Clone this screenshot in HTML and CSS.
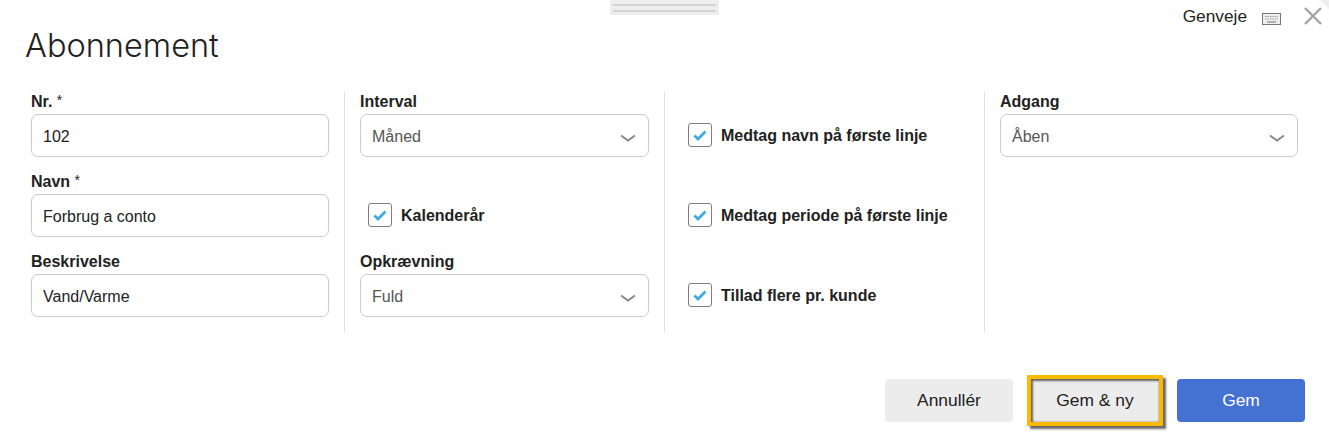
FILE: index.html
```html
<!DOCTYPE html>
<html lang="da">
<head>
  <meta charset="UTF-8" />
  <title>Abonnement</title>
  <link rel="stylesheet" href="styles.css">
</head>
<body>
  <div class="dialog">
    <div class="drag-handle"><span></span><span></span></div>
    <div class="corner"></div>

    <div class="topbar">
      <span class="shortcut">Genveje</span>
      <svg class="keyboard" width="20" height="14" viewBox="0 0 20 14">
        <rect x="0.5" y="1.5" width="18" height="11" fill="#eee" stroke="#777" />
        <path d="M3 4.5h13M3 7h13" stroke="#999" stroke-width="1.2" stroke-dasharray="1.5 1" fill="none" />
        <path d="M5 10h9" stroke="#888" stroke-width="1.2" fill="none" />
      </svg>
      <svg class="close" width="20" height="20" viewBox="0 0 20 20">
        <path d="M2 2l16 16M18 2L2 18" stroke="#a3a3a3" stroke-width="2.4" fill="none" />
      </svg>
    </div>

    <h1 class="title">Abonnement</h1>

    <form class="columns">
      <div class="col col-first">
        <div class="field">
          <label>Nr. <span class="req">*</span></label>
          <input class="control" type="text" value="102">
        </div>
        <div class="field">
          <label>Navn <span class="req">*</span></label>
          <input class="control" type="text" value="Forbrug a conto">
        </div>
        <div class="field">
          <label>Beskrivelse</label>
          <input class="control" type="text" value="Vand/Varme">
        </div>
      </div>

      <div class="col">
        <div class="field">
          <label>Interval</label>
          <div class="control select">
            <span>Måned</span>
            <svg width="16" height="8" viewBox="0 0 16 8"><path d="M1 1.5l7 5 7-5" stroke="#888" stroke-width="2" fill="none" /></svg>
          </div>
        </div>
        <div class="field check-field">
          <span class="box"><svg width="14" height="12" viewBox="0 0 14 12"><path d="M1.5 6.5l3.5 3.5L12.5 2.5" stroke="#3fa9e6" stroke-width="2.8" fill="none" /></svg></span>
          <span class="check-label">Kalenderår</span>
        </div>
        <div class="field">
          <label>Opkrævning</label>
          <div class="control select">
            <span>Fuld</span>
            <svg width="16" height="8" viewBox="0 0 16 8"><path d="M1 1.5l7 5 7-5" stroke="#888" stroke-width="2" fill="none" /></svg>
          </div>
        </div>
      </div>

      <div class="col">
        <div class="field check-field">
          <span class="box"><svg width="14" height="12" viewBox="0 0 14 12"><path d="M1.5 6.5l3.5 3.5L12.5 2.5" stroke="#3fa9e6" stroke-width="2.8" fill="none" /></svg></span>
          <span class="check-label">Medtag navn på første linje</span>
        </div>
        <div class="field check-field">
          <span class="box"><svg width="14" height="12" viewBox="0 0 14 12"><path d="M1.5 6.5l3.5 3.5L12.5 2.5" stroke="#3fa9e6" stroke-width="2.8" fill="none" /></svg></span>
          <span class="check-label">Medtag periode på første linje</span>
        </div>
        <div class="field check-field">
          <span class="box"><svg width="14" height="12" viewBox="0 0 14 12"><path d="M1.5 6.5l3.5 3.5L12.5 2.5" stroke="#3fa9e6" stroke-width="2.8" fill="none" /></svg></span>
          <span class="check-label">Tillad flere pr. kunde</span>
        </div>
      </div>

      <div class="col col-last">
        <div class="field">
          <label>Adgang</label>
          <div class="control select">
            <span>Åben</span>
            <svg width="16" height="8" viewBox="0 0 16 8"><path d="M1 1.5l7 5 7-5" stroke="#888" stroke-width="2" fill="none" /></svg>
          </div>
        </div>
      </div>
    </form>

    <div class="actions">
      <button class="btn" type="button">Annullér</button>
      <button class="btn btn-focus" type="button">Gem &amp; ny</button>
      <button class="btn btn-primary" type="button">Gem</button>
    </div>
  </div>
</body>
</html>
```

FILE: styles.css
```css
html, body {
  margin: 0;
  padding: 0;
  height: 100%;
  font-family: "Liberation Sans", Arial, sans-serif;
  color: #222;
  background-color: white;
  overflow: hidden;
}

.dialog {
  position: relative;
  height: 446px;
}

.drag-handle {
  position: absolute;
  top: 0;
  left: 610px;
  width: 109px;
  height: 15px;
  background-color: #eee;
  display: flex;
  flex-direction: column;
  gap: 4px;
  padding: 4px 3px 0;
  box-sizing: border-box;
}

.drag-handle span {
  display: block;
  height: 2px;
  background-color: #d4d4d4;
}

.corner {
  position: absolute;
  top: 0;
  right: 0;
  border-top: 9px solid #eee;
  border-left: 9px solid transparent;
}

.topbar {
  display: flex;
  justify-content: flex-end;
  align-items: center;
  height: 32px;
  padding-right: 6px;
}

.shortcut {
  font-size: 17.3px;
  margin-right: 15px;
}

.keyboard {
  margin-right: 21px;
  margin-top: 5px;
}

.close {
  margin-top: -1px;
}

.title {
  margin: -6px 0 0 25px;
  font-family: Inter, sans-serif;
  font-weight: 300;
  font-size: 32.5px;
  line-height: 40px;
  color: #222;
}

.columns {
  display: flex;
  margin: 26px 0 0 16px;
}

.col {
  width: 289px;
  height: 240px;
  padding: 0 15px;
  border-right: 1px solid #e2e2e2;
}

.col-first {
  width: 298px;
}

.col-last {
  width: 298px;
  border-right: none;
}

.field {
  height: 80px;
  box-sizing: border-box;
}

.field label {
  display: block;
  font-size: 16px;
  font-weight: bold;
  line-height: 18px;
  padding-top: 1px;
  margin-bottom: 3px;
  color: #222;
}

.req {
  font-weight: normal;
  font-size: 14px;
  line-height: 0;
  vertical-align: 2px;
}

.control {
  display: block;
  width: 100%;
  height: 43px;
  box-sizing: border-box;
  padding: 2px 11px 0;
  border: 1px solid #ccc;
  border-radius: 7px;
  font-family: inherit;
  font-size: 16px;
  color: #222;
  background-color: white;
}

.select {
  display: flex;
  justify-content: space-between;
  align-items: center;
  padding-right: 12px;
  color: #555;
}

.select svg {
  margin-top: 2px;
}

.check-field {
  display: flex;
  align-items: flex-start;
  gap: 9px;
  padding: 31px 0 0 8px;
}

.box {
  width: 22px;
  height: 22px;
  border: 1px solid #808080;
  border-radius: 3px;
  display: flex;
  align-items: center;
  justify-content: center;
  flex: none;
}

.check-label {
  font-size: 16px;
  font-weight: bold;
  line-height: 26px;
}

.actions {
  display: flex;
  justify-content: flex-end;
  gap: 18px;
  margin-top: 47px;
  padding-right: 24px;
}

.btn {
  width: 128px;
  height: 43px;
  border: none;
  border-radius: 4px;
  background-color: #ececec;
  color: #222;
  font-family: inherit;
  font-size: 17.4px;
  cursor: pointer;
}

.btn-focus {
  border-radius: 0;
  outline: 4px solid #fdb900;
  box-shadow: inset 1px 1px 2px 1px #666, 3px 3px 2px 4px rgba(0,0,0,0.6);
}

.btn-primary {
  background-color: #4472d2;
  color: white;
}
```
